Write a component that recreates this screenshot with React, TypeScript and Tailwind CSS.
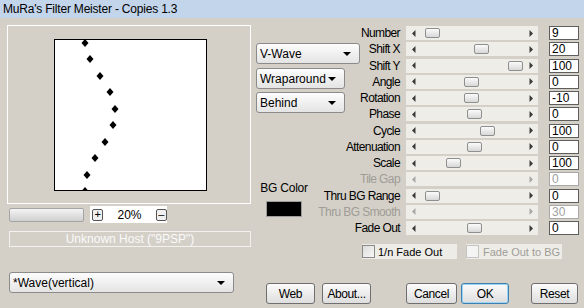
import React from "react";

interface SliderRow {
  label: string;
  value: string;
  thumb?: number; // px from left edge of the track
  disabled?: boolean;
}

const rows: SliderRow[] = [
  { label: "Number", value: "9", thumb: 19 },
  { label: "Shift X", value: "20", thumb: 68 },
  { label: "Shift Y", value: "100", thumb: 102 },
  { label: "Angle", value: "0", thumb: 58 },
  { label: "Rotation", value: "-10", thumb: 58 },
  { label: "Phase", value: "0", thumb: 61 },
  { label: "Cycle", value: "100", thumb: 74 },
  { label: "Attenuation", value: "0", thumb: 61 },
  { label: "Scale", value: "100", thumb: 40 },
  { label: "Tile Gap", value: "0", disabled: true },
  { label: "Thru BG Range", value: "0", thumb: 19 },
  { label: "Thru BG Smooth", value: "30", disabled: true },
  { label: "Fade Out", value: "0", thumb: 61 },
];

// wave dots inside the preview (x, y)
const dots: [number, number][] = [
  [30, 3], [35, 19], [45, 36], [55, 52], [60, 69],
  [58, 85], [50, 102], [40, 118], [32, 135], [30, 151],
];

const Arrow = ({ dir, disabled }: { dir: "left" | "right"; disabled?: boolean }) => {
  const color = disabled ? "#a8a8a8" : "#3a3a3a";
  return (
    <svg width="4" height="7" viewBox="0 0 4 7" className="block">
      {dir === "left" ? (
        <polygon points="3.5,0 3.5,7 0,3.5" fill={color} />
      ) : (
        <polygon points="0.5,0 0.5,7 4,3.5" fill={color} />
      )}
    </svg>
  );
};

const Track = ({ thumb, disabled }: { thumb?: number; disabled?: boolean }) => (
  <div className="relative flex h-[14px] w-[132px] items-center justify-between bg-[#efede7] pl-[6px] pr-[5px]">
    <Arrow dir="left" disabled={disabled} />
    {thumb !== undefined && (
      <span
        className="absolute top-[2px] h-[10px] w-[15px] rounded-[2px] border border-[#8e8f8f] bg-gradient-to-b from-[#fbfbfb] to-[#d8d8d8]"
        style={{ left: thumb }}
      />
    )}
    <Arrow dir="right" disabled={disabled} />
  </div>
);

const Dropdown = ({ label, className }: { label: string; className: string }) => (
  <div
    className={`flex items-center justify-between rounded-[3px] border border-[#8b8b8b] bg-gradient-to-b from-[#fdfdfd] to-[#e4e4e4] pl-[3px] pr-[8px] text-[12px] text-black ${className}`}
  >
    <span className="whitespace-nowrap">{label}</span>
    <span className="h-0 w-0 border-x-[4px] border-x-transparent border-t-[4px] border-t-black" />
  </div>
);

const Button = ({ label, className }: { label: string; className: string }) => (
  <button
    className={`flex h-[21px] items-center justify-center rounded-[3px] bg-gradient-to-b from-[#fbfbfb] to-[#dedede] text-[12px] tracking-[-0.4px] text-black ${className}`}
  >
    {label}
  </button>
);

export default function App() {
  return (
    <div className="h-[308px] w-[584px] overflow-hidden bg-[#d4d0c8] font-['Liberation_Sans',Arial,sans-serif] text-black">
      {/* title bar */}
      <div className="flex h-[18px] items-center bg-[#c3d5ea] pl-[3px] text-[12px] tracking-[-0.2px] text-black">
        MuRa's Filter Meister - Copies 1.3
      </div>

      <div className="flex pt-[7px]">
        {/* left column */}
        <div className="ml-[7px] flex w-[244px] flex-col">
          <div className="h-[179px] border border-white pl-[46px] pt-[13px]">
            <div className="h-[152px] w-[153px] border border-black bg-white">
              <svg width="151" height="150" viewBox="0 0 151 150" className="block">
                {dots.map(([x, y], i) => (
                  <polygon
                    key={i}
                    points={`${x},${y - 4} ${x + 3.5},${y} ${x},${y + 4} ${x - 3.5},${y}`}
                    fill="#000"
                  />
                ))}
              </svg>
            </div>
          </div>

          <div className="mt-[2px] flex h-[17px] items-center">
            <div className="ml-[2px] h-[14px] w-[75px] rounded-[2px] border border-[#a5a5a5] bg-gradient-to-b from-[#f4f4f4] to-[#cfcfcf]" />
            <div className="ml-[6px] flex h-[17px] w-[77px] items-center bg-white">
              <span className="ml-[2px] flex h-[12px] w-[12px] items-center justify-center rounded-[2px] border border-[#555] bg-[#f0f0f0] text-[11px] leading-none">
                +
              </span>
              <span className="ml-[14px] text-[12px]">20%</span>
              <span className="ml-[14px] flex h-[12px] w-[12px] items-center justify-center rounded-[2px] border border-[#555] bg-[#f0f0f0] text-[11px] leading-none">
                –
              </span>
            </div>
          </div>

          <div className="ml-[2px] mt-[8px] flex h-[16px] w-[242px] items-center justify-center border border-[#f2f1ee] text-[12px] text-[#fafafa]">
            Unknown Host ("9PSP")
          </div>

          <Dropdown label="*Wave(vertical)" className="ml-[2px] mt-[25px] h-[21px] w-[225px]" />
        </div>

        {/* right area */}
        <div className="ml-[5px] flex flex-col">
          <div className="grid grid-cols-[62px_88px_143px_30px] grid-rows-[repeat(13,16.25px)] items-center">
            <div className="col-start-1 row-span-13 row-start-1 flex flex-col self-stretch">
              <Dropdown label="V-Wave" className="mt-[18px] h-[21px] w-[104px]" />
              <Dropdown label="Wraparound" className="mt-[4px] h-[21px] w-[89px]" />
              <Dropdown label="Behind" className="mt-[3px] h-[21px] w-[89px]" />
              <div className="mb-[19px] ml-[4px] mt-auto flex w-[48px] flex-col items-center">
                <span className="whitespace-nowrap text-[12px] tracking-[-0.2px]">BG Color</span>
                <span className="mt-[4px] h-[16px] w-[36px] border border-[#9d9d9d] bg-black" />
              </div>
            </div>

            {rows.map((r) => (
              <React.Fragment key={r.label}>
                <div
                  className={`whitespace-nowrap pr-[6px] text-right text-[12px] tracking-[-0.6px] ${r.disabled ? "text-[#a09d97]" : "text-black"}`}
                >
                  {r.label}
                </div>
                <Track thumb={r.thumb} disabled={r.disabled} />
                <div
                  className={`flex h-[14px] w-[30px] items-center border bg-white pl-[2px] text-[12px] ${r.disabled ? "border-[#a8a8a8] text-[#a0a0a0]" : "border-[#5e5e5e] text-black"}`}
                >
                  {r.value}
                </div>
              </React.Fragment>
            ))}
          </div>

          {/* check boxes */}
          <div className="mt-[8px] flex h-[15px] items-center text-[11px]">
            <label className="ml-[106px] flex h-[15px] w-[95px] items-center whitespace-nowrap bg-[#eeece7]">
              <span className="h-[13px] w-[13px] border border-[#8a8a8a] bg-gradient-to-br from-[#dcdcdc] to-[#f8f8f8]" />
              <span className="ml-[3px]">1/n Fade Out</span>
            </label>
            <label className="ml-[9px] flex h-[15px] w-[96px] items-center whitespace-nowrap bg-[#eeece7] text-[#a09d97]">
              <span className="h-[13px] w-[13px] border border-[#c4c4c4] bg-[#f4f4f4]" />
              <span className="ml-[4px]">Fade Out to BG</span>
            </label>
          </div>

          {/* buttons */}
          <div className="mt-[24px] flex">
            <Button label="Web" className="ml-[10px] w-[49px] border border-[#6f6f6f]" />
            <Button label="About..." className="ml-[7px] w-[49px] border border-[#6f6f6f]" />
            <Button label="Cancel" className="ml-[35px] w-[51px] border border-[#6f6f6f]" />
            <Button
              label="OK"
              className="ml-[4px] w-[48px] border border-[#3c7fb1] shadow-[inset_0_0_0_1px_#9fd4f2]"
            />
            <Button label="Reset" className="ml-[22px] w-[47px] border border-[#6f6f6f]" />
          </div>
        </div>
      </div>
    </div>
  );
}
